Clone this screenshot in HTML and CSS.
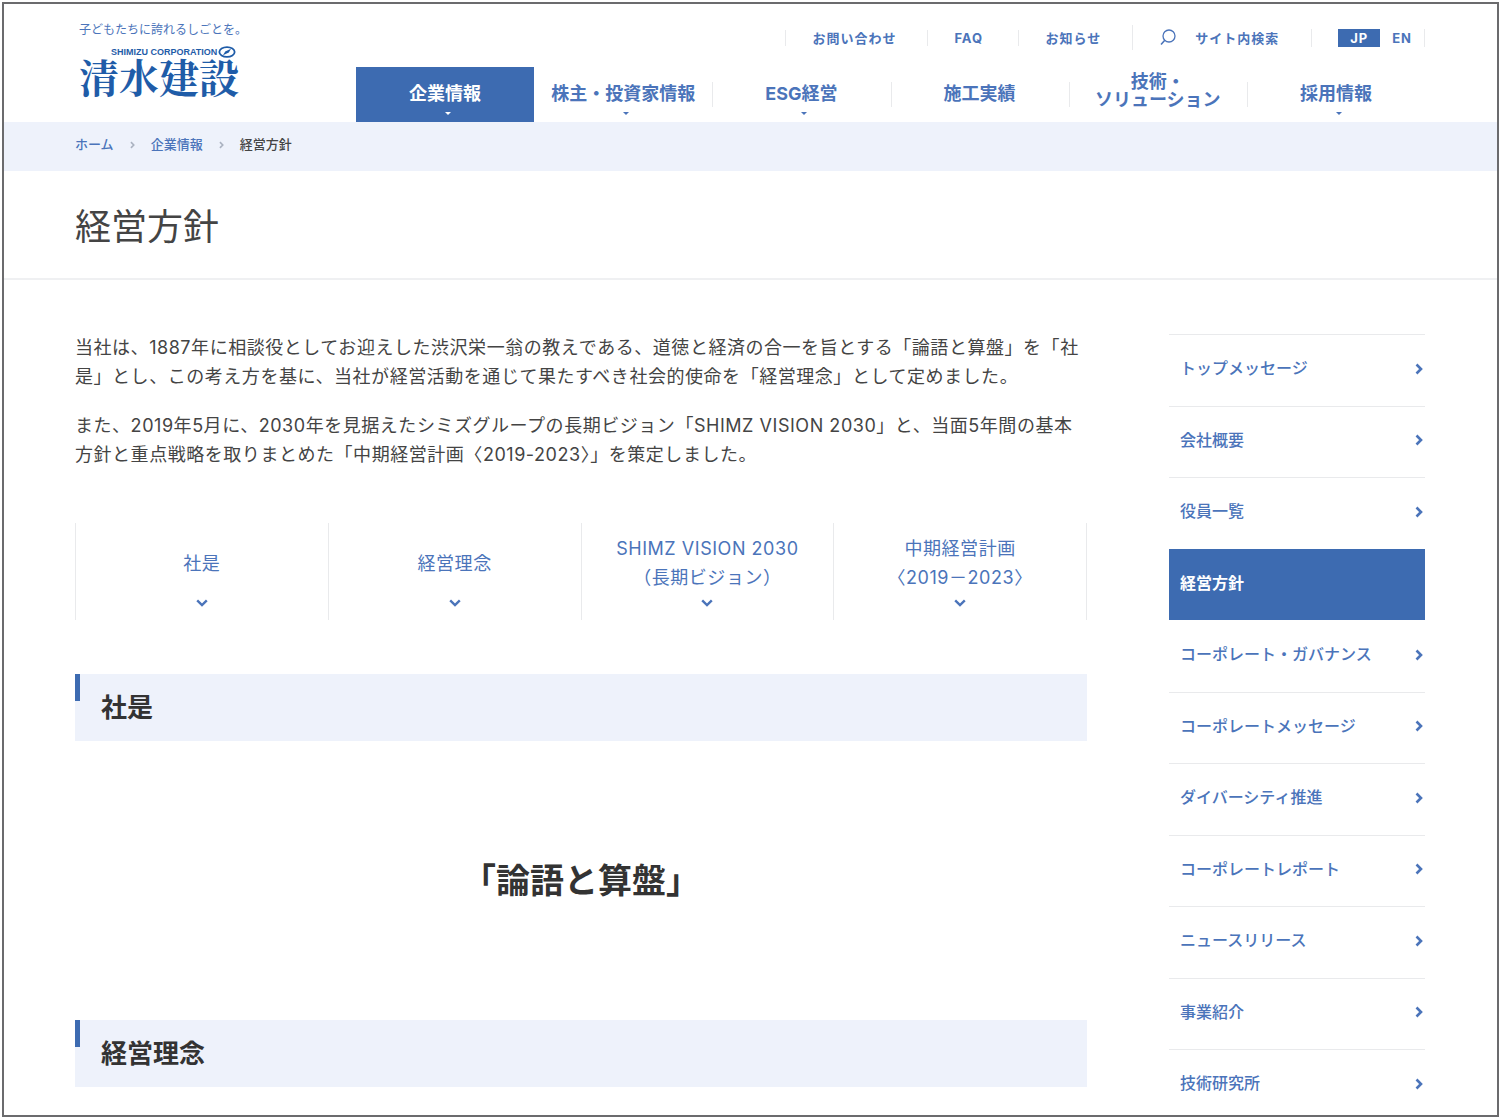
FILE: index.html
```html
<!DOCTYPE html>
<html lang="ja">
<head>
<meta charset="utf-8">
<meta name="viewport" content="width=device-width, initial-scale=1">
<title>経営方針 | 清水建設</title>
<link rel="stylesheet" href="styles.css">
</head>
<body>
<svg class="sprite" aria-hidden="true">
  <symbol id="right" viewBox="0 0 8 12"><path d="M1.500 1.500 6 6 1.500 10.500" fill="none" stroke="currentColor" stroke-width="2.600"/></symbol>
  <symbol id="down" viewBox="0 0 12 8"><path d="M1.200 1.300 6 6 10.800 1.300" fill="none" stroke="currentColor" stroke-width="2.400"/></symbol>
</svg>
<div class="page">
  <header class="header">
    <a class="logo" href="#">
      <span class="logo-tagline">子どもたちに誇れるしごとを。</span>
      <span class="logo-english">SHIMIZU CORPORATION
        <svg class="logo-mark" viewBox="0 0 20 14" aria-hidden="true"><ellipse cx="10" cy="7" rx="8.500" ry="5.500" fill="none" stroke="currentColor" stroke-width="2"/><path d="M5.500 10.500 8 6.500 14.500 3.500 12 7.500Z" fill="currentColor"/></svg>
      </span>
      <span class="logo-name">清水建設</span>
    </a>
    <div class="header-menus">
      <ul class="utility">
        <li><a href="#">お問い合わせ</a></li>
        <li><a href="#">FAQ</a></li>
        <li><a href="#">お知らせ</a></li>
        <li class="utility-search">
          <button type="button" class="search">
            <svg class="search-icon" viewBox="0 0 16 17" aria-hidden="true"><circle cx="9" cy="7" r="6" fill="none" stroke="currentColor" stroke-width="1.300"/><path d="M4.800 11.300 1 15.500" stroke="currentColor" stroke-width="1.600"/></svg>
            サイト内検索
          </button>
        </li>
        <li class="languages">
          <a class="language language-current" href="#">JP</a>
          <a class="language" href="#">EN</a>
        </li>
      </ul>
      <nav class="global-nav" aria-label="メイン">
        <a class="global-link has-menu is-current" href="#">企業情報</a>
        <a class="global-link has-menu" href="#">株主・投資家情報</a>
        <a class="global-link has-menu" href="#">ESG経営</a>
        <a class="global-link" href="#">施工実績</a>
        <a class="global-link two-lines" href="#">技術・<br>ソリューション</a>
        <a class="global-link has-menu" href="#">採用情報</a>
      </nav>
    </div>
  </header>

  <nav class="breadcrumb" aria-label="パンくず">
    <a href="#">ホーム</a>
    <svg class="crumb-arrow" aria-hidden="true"><use href="#right"/></svg>
    <a href="#">企業情報</a>
    <svg class="crumb-arrow" aria-hidden="true"><use href="#right"/></svg>
    <span>経営方針</span>
  </nav>

  <div class="title-band"><h1 class="title">経営方針</h1></div>

  <div class="columns">
    <main class="content">
      <div class="intro">
        <p>当社は、1887年に相談役としてお迎えした渋沢栄一翁の教えである、道徳と経済の合一を旨とする「論語と算盤」を「社<br>是」とし、この考え方を基に、当社が経営活動を通じて果たすべき社会的使命を「経営理念」として定めました。</p>
        <p>また、2019年5月に、2030年を見据えたシミズグループの長期ビジョン「SHIMZ VISION 2030」と、当面5年間の基本<br>方針と重点戦略を取りまとめた「中期経営計画〈2019-2023〉」を策定しました。</p>
      </div>
      <nav class="anchors" aria-label="ページ内">
        <a class="anchor" href="#creed"><span class="anchor-label">社是</span><svg class="anchor-arrow" aria-hidden="true"><use href="#down"/></svg></a>
        <a class="anchor" href="#philosophy"><span class="anchor-label">経営理念</span><svg class="anchor-arrow" aria-hidden="true"><use href="#down"/></svg></a>
        <a class="anchor" href="#"><span class="anchor-label">SHIMZ VISION 2030<br>（長期ビジョン）</span><svg class="anchor-arrow" aria-hidden="true"><use href="#down"/></svg></a>
        <a class="anchor" href="#"><span class="anchor-label">中期経営計画<br>〈2019－2023〉</span><svg class="anchor-arrow" aria-hidden="true"><use href="#down"/></svg></a>
      </nav>
      <section>
        <h2 class="section-title" id="creed">社是</h2>
        <p class="creed">「論語と算盤」</p>
      </section>
      <section>
        <h2 class="section-title" id="philosophy">経営理念</h2>
      </section>
    </main>
    <aside class="side">
      <ul class="side-list">
        <li><a class="side-link" href="#">トップメッセージ<svg class="side-arrow" aria-hidden="true"><use href="#right"/></svg></a></li>
        <li><a class="side-link" href="#">会社概要<svg class="side-arrow" aria-hidden="true"><use href="#right"/></svg></a></li>
        <li><a class="side-link" href="#">役員一覧<svg class="side-arrow" aria-hidden="true"><use href="#right"/></svg></a></li>
        <li><a class="side-link is-current" href="#" aria-current="page">経営方針</a></li>
        <li><a class="side-link is-first" href="#">コーポレート・ガバナンス<svg class="side-arrow" aria-hidden="true"><use href="#right"/></svg></a></li>
        <li><a class="side-link" href="#">コーポレートメッセージ<svg class="side-arrow" aria-hidden="true"><use href="#right"/></svg></a></li>
        <li><a class="side-link" href="#">ダイバーシティ推進<svg class="side-arrow" aria-hidden="true"><use href="#right"/></svg></a></li>
        <li><a class="side-link" href="#">コーポレートレポート<svg class="side-arrow" aria-hidden="true"><use href="#right"/></svg></a></li>
        <li><a class="side-link" href="#">ニュースリリース<svg class="side-arrow" aria-hidden="true"><use href="#right"/></svg></a></li>
        <li><a class="side-link" href="#">事業紹介<svg class="side-arrow" aria-hidden="true"><use href="#right"/></svg></a></li>
        <li><a class="side-link" href="#">技術研究所<svg class="side-arrow" aria-hidden="true"><use href="#right"/></svg></a></li>
      </ul>
    </aside>
  </div>
</div>
</body>
</html>
```
FILE: styles.css
```css
:root {
  --blue: #3d6bb1;
  --link: #4b74ba;
  --pale: #eef2fb;
  --line: #e9eaec;
  --text: #444;
}

* { box-sizing: border-box; }

body {
  margin: 0;
  padding: 2px 1px 2px 2px;
  background: #fff;
  color: var(--text);
  font-family: Inter, "Noto Sans CJK JP", sans-serif;
  font-size: 18px;
  line-height: 29px;
}

a { color: var(--link); text-decoration: none; }
ul { margin: 0; padding: 0; list-style: none; }
.sprite { display: none; }

.page {
  height: calc(100vh - 4px);
  overflow: hidden;
  border: 2px solid #6b6b6d;
}

/* Header */
.header {
  display: flex;
  padding: 0 72px 0 71px;
}

.logo {
  display: flex;
  flex-direction: column;
  flex: 0 0 281px;
  padding: 16px 0 0 4px;
}

.logo-tagline {
  font-size: 12px;
  line-height: 20px;
}

.logo-english {
  display: flex;
  align-items: center;
  gap: 1px;
  padding-left: 32px;
  color: #1f5ca8;
  font-family: "Liberation Sans", sans-serif;
  font-size: 9px;
  font-weight: bold;
  line-height: 24px;
}

.logo-mark { width: 18px; height: 14px; }

.logo-name {
  color: #1f5ca8;
  font-family: "Noto Serif CJK JP", "Noto Sans CJK JP", serif;
  font-size: 40px;
  font-weight: bold;
  line-height: 24px;
}

.header-menus { flex: 1; }

.utility {
  display: flex;
  justify-content: flex-end;
  align-items: center;
  height: 63px;
  padding-top: 4px;
  font-size: 13px;
  font-weight: bold;
  letter-spacing: 1px;
  line-height: 16px;
}

.utility li {
  min-width: 91px;
  padding: 0 31px 0 26px;
  border-left: 1px solid var(--line);
}

.utility .utility-search {
  padding: 4px 32px 4px 27px;
}

.search {
  display: flex;
  align-items: center;
  gap: 19px;
  padding: 0;
  border: 0;
  background: none;
  color: var(--link);
  font: inherit;
  letter-spacing: inherit;
}

.search-icon { width: 16px; height: 17px; }

.utility .languages {
  display: flex;
  padding-right: 0;
  border-right: 1px solid var(--line);
}

.language {
  padding: 0 12px;
  line-height: 18px;
}

.language-current {
  background: var(--blue);
  color: #fff;
}

.global-nav {
  display: grid;
  grid-template-columns: repeat(6, 1fr);
}

.global-link {
  position: relative;
  display: flex;
  align-items: center;
  justify-content: center;
  height: 55px;
  padding-bottom: 2px;
  font-weight: bold;
  line-height: 18px;
  text-align: center;
}

.global-link.two-lines { padding-bottom: 8px; }

.global-link + .global-link + .global-link::before {
  content: "";
  position: absolute;
  left: 0;
  top: 15px;
  width: 1px;
  height: 25px;
  background: var(--line);
}

.has-menu::after {
  content: "";
  position: absolute;
  left: 50%;
  bottom: 7px;
  border: 3px solid transparent;
  border-top-color: currentColor;
  border-bottom: 0;
}

.global-link.is-current {
  background: var(--blue);
  color: #fff;
}

/* Breadcrumb and page title */
.breadcrumb {
  display: flex;
  align-items: center;
  gap: 16px;
  height: 49px;
  padding: 0 71px 4px;
  background: var(--pale);
  font-size: 13px;
  font-weight: 500;
}

.crumb-arrow {
  width: 5px;
  height: 8px;
  color: #aab2c0;
}

.title-band {
  padding: 31px 71px 25px;
  border-bottom: 2px solid #eff0f2;
}

.title {
  margin: 0;
  font-size: 36px;
  font-weight: normal;
  line-height: 51px;
}

/* Columns */
.columns {
  display: flex;
  gap: 82px;
  padding: 53px 72px 28px 71px;
}

.content { flex: 1; min-width: 0; }

.intro,
.anchors { letter-spacing: 0.03em; }

.intro p { margin: 0 0 20px; }

.anchors {
  display: grid;
  grid-template-columns: repeat(4, 1fr);
  margin: 54px 0;
  border-left: 1px solid var(--line);
}

.anchor {
  display: flex;
  flex-direction: column;
  align-items: center;
  gap: 7px;
  padding: 11px 0 13px;
  border-right: 1px solid var(--line);
  text-align: center;
}

.anchor-label {
  display: flex;
  align-items: center;
  min-height: 58px;
}

.anchor-arrow { width: 12px; height: 8px; }

.section-title {
  position: relative;
  margin: 0;
  padding: 19px 26px;
  background: var(--pale);
  color: #333;
  font-size: 26px;
  font-weight: bold;
  line-height: 29px;
}

.section-title::before {
  content: "";
  position: absolute;
  left: 0;
  top: 0;
  width: 5px;
  height: 27px;
  background: var(--blue);
}

.creed {
  margin: 0;
  padding: 114px 0;
  color: #333;
  font-size: 34px;
  font-weight: bold;
  line-height: 51px;
  text-align: center;
}

/* Side menu */
.side {
  flex: 0 0 256px;
  padding-top: 1px;
}

.side-list {
  display: grid;
  grid-auto-rows: 72px 71px;
}

.side-link {
  display: flex;
  align-items: center;
  justify-content: space-between;
  height: 100%;
  padding: 0 2px 4px 11px;
  border-top: 1px solid var(--line);
  font-size: 16px;
  font-weight: 500;
}

.side-link.is-current {
  border-top-color: var(--blue);
  background: var(--blue);
  color: #fff;
  font-weight: bold;
}

.side-link.is-first { border-top-color: transparent; }

.side-arrow { width: 8px; height: 12px; }
```
